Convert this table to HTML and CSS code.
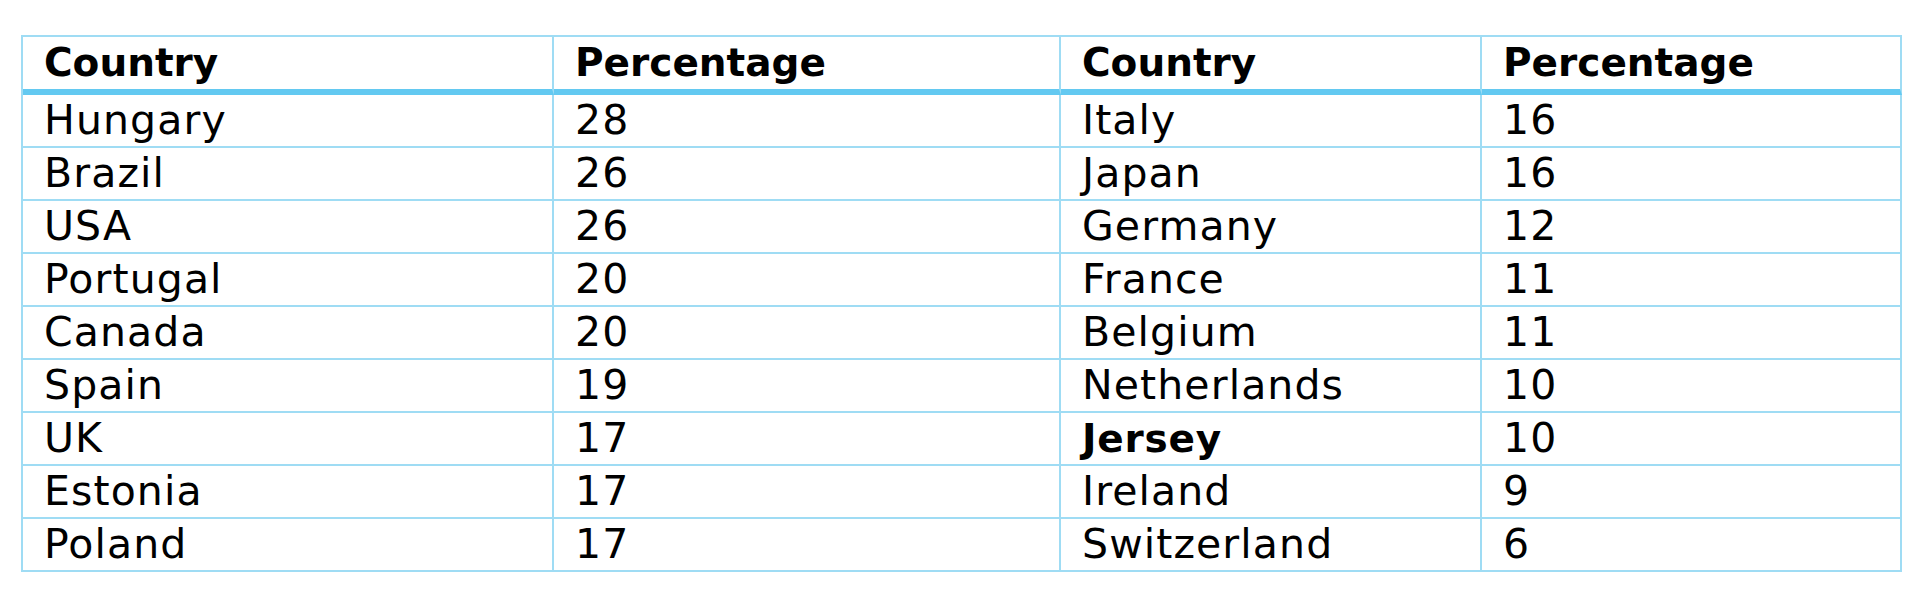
FILE: index.html
```html
<!DOCTYPE html>
<html lang="en">
<head>
<meta charset="utf-8">
<title>Country percentages</title>
<link rel="stylesheet" href="styles.css">
</head>
<body>
<table class="data">
  <colgroup>
    <col class="c1"><col class="c2"><col class="c3"><col class="c4">
  </colgroup>
  <thead>
    <tr><th>Country</th><th>Percentage</th><th>Country</th><th>Percentage</th></tr>
  </thead>
  <tbody>
    <tr><td>Hungary</td><td>28</td><td>Italy</td><td>16</td></tr>
    <tr><td>Brazil</td><td>26</td><td>Japan</td><td>16</td></tr>
    <tr><td>USA</td><td>26</td><td>Germany</td><td>12</td></tr>
    <tr><td>Portugal</td><td>20</td><td>France</td><td>11</td></tr>
    <tr><td>Canada</td><td>20</td><td>Belgium</td><td>11</td></tr>
    <tr><td>Spain</td><td>19</td><td>Netherlands</td><td>10</td></tr>
    <tr><td>UK</td><td>17</td><td class="strong">Jersey</td><td>10</td></tr>
    <tr><td>Estonia</td><td>17</td><td>Ireland</td><td>9</td></tr>
    <tr><td>Poland</td><td>17</td><td>Switzerland</td><td>6</td></tr>
  </tbody>
</table>
</body>
</html>
```

FILE: styles.css
```css
html, body {
  margin: 0;
  padding: 0;
  background: #ffffff;
}

body {
  font-family: "DejaVu Sans", "Liberation Sans", sans-serif;
  color: #000000;
}

.data {
  margin: 35px 0 0 21px;
  border-collapse: separate;
  border-spacing: 0;
  table-layout: fixed;
  width: 1881px;
  border-top: 2px solid #9fdcf4;
  border-left: 2px solid #9fdcf4;
}

.c1 { width: 531px; }
.c2 { width: 507px; }
.c3 { width: 421px; }
.c4 { width: 420px; }

.data th,
.data td {
  box-sizing: border-box;
  text-align: left;
  padding: 0 0 0 21px;
  border-right: 2px solid #9fdcf4;
  white-space: nowrap;
  vertical-align: middle;
}

.data th {
  height: 58px;
  font-size: 39px;
  font-weight: 700;
  border-bottom: 6px solid #63c9f1;
  line-height: 52px;
}

.data td {
  height: 53px;
  font-size: 41px;
  font-weight: 400;
  letter-spacing: 1.1px;
  border-bottom: 2px solid #9fdcf4;
  line-height: 51px;
}

.data td.strong {
  font-weight: 700;
  font-size: 39px;
  letter-spacing: 0.8px;
}
```
